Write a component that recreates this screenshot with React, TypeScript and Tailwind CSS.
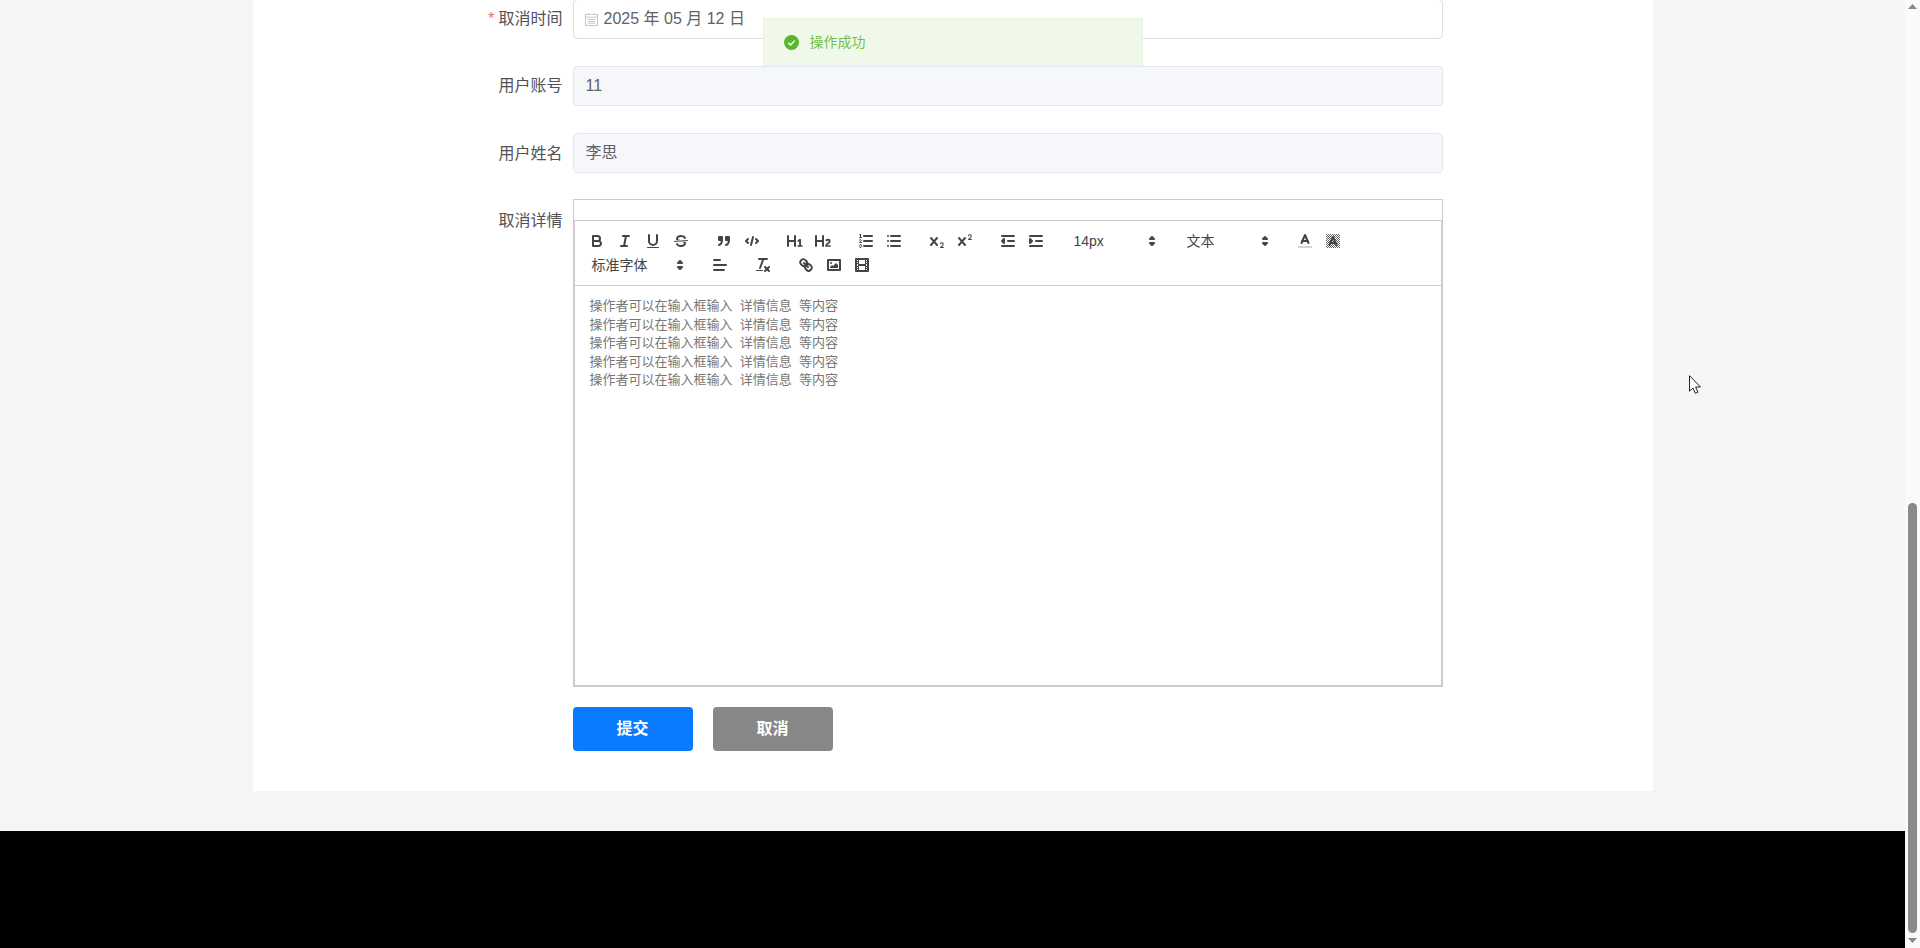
import type { ReactNode } from "react";

const FILL = { fill: "#444", stroke: "none" };

function Glyph({ children }: { children: ReactNode }) {
  return (
    <svg
      viewBox="0 0 18 18"
      className="h-[18px] w-[18px]"
      fill="none"
      stroke="#444"
      strokeWidth={2}
      strokeLinecap="round"
      strokeLinejoin="round"
    >
      {children}
    </svg>
  );
}

function ToolButton({ children }: { children: ReactNode }) {
  return (
    <button type="button" className="h-6 w-7 px-[5px] py-[3px]">
      <Glyph>{children}</Glyph>
    </button>
  );
}

function Picker({ label, width }: { label: string; width: string }) {
  return (
    <div className={`relative flex h-6 items-center pl-[9px] text-sm text-[#444] ${width}`}>
      <span>{label}</span>
      <svg
        viewBox="0 0 18 18"
        className="absolute top-[3px] right-[2px] h-[18px] w-[18px]"
        fill="#444"
        stroke="#444"
        strokeWidth={2}
        strokeLinejoin="round"
      >
        <polygon points="7 11 9 13 11 11 7 11" />
        <polygon points="7 7 9 5 11 7 7 7" />
      </svg>
    </div>
  );
}

function Formats({ children }: { children: ReactNode }) {
  return <div className="mr-[15px] flex h-6">{children}</div>;
}

function Toolbar() {
  return (
    <div className="flex flex-wrap border border-[#ccc] p-2">
      <Formats>
        <ToolButton>
          <path d="M5,4H9.5A2.5,2.5,0,0,1,12,6.5v0A2.5,2.5,0,0,1,9.5,9H5A0,0,0,0,1,5,9V4A0,0,0,0,1,5,4Z" />
          <path d="M5,9h5.5A2.5,2.5,0,0,1,13,11.5v0A2.5,2.5,0,0,1,10.5,14H5a0,0,0,0,1,0,0V9A0,0,0,0,1,5,9Z" />
        </ToolButton>
        <ToolButton>
          <line x1="7" x2="13" y1="4" y2="4" />
          <line x1="5" x2="11" y1="14" y2="14" />
          <line x1="8" x2="10" y1="14" y2="4" />
        </ToolButton>
        <ToolButton>
          <path d="M5,3V9a4.012,4.012,0,0,0,4,4H9a4.012,4.012,0,0,0,4-4V3" />
          <rect {...FILL} height="1" rx="0.5" ry="0.5" width="12" x="3" y="15" />
        </ToolButton>
        <ToolButton>
          <line strokeWidth={1} x1="15.5" x2="2.5" y1="8.5" y2="9.5" />
          <path {...FILL} d="M9.007,8C6.542,7.791,6,7.519,6,6.5,6,5.792,7.283,5,9,5c1.571,0,2.765.679,2.969,1.309a1,1,0,0,0,1.9-.617C13.356,4.106,11.354,3,9,3,6.2,3,4,4.538,4,6.5a3.2,3.2,0,0,0,.5,1.843Z" />
          <path {...FILL} d="M8.984,10C11.457,10.208,12,10.479,12,11.5c0,.708-1.283,1.5-3,1.5-1.571,0-2.765-.679-2.969-1.309a1,1,0,1,0-1.9.617C4.644,13.894,6.646,15,9,15c2.8,0,5-1.538,5-3.5a3.2,3.2,0,0,0-.5-1.843Z" />
        </ToolButton>
      </Formats>
      <Formats>
        <ToolButton>
          <rect fill="#444" height="3" width="3" x="4" y="5" />
          <rect fill="#444" height="3" width="3" x="11" y="5" />
          <path d="M7,8c0,4.031-3,5-3,5" />
          <path d="M14,8c0,4.031-3,5-3,5" />
        </ToolButton>
        <ToolButton>
          <polyline points="5 7 3 9 5 11" />
          <polyline points="13 7 15 9 13 11" />
          <line x1="10" x2="8" y1="5" y2="13" />
        </ToolButton>
      </Formats>
      <Formats>
        <ToolButton>
          <path {...FILL} d="M10,4V14a1,1,0,0,1-2,0V10H3v4a1,1,0,0,1-2,0V4A1,1,0,0,1,3,4V8H8V4a1,1,0,0,1,2,0Zm6.06787,9.209H14.98975V7.59863a.54085.54085,0,0,0-.605-.60547h-.62744a1.01119,1.01119,0,0,0-.748.29688L11.645,8.56641a.5435.5435,0,0,0-.022.8584l.28613.30762a.53861.53861,0,0,0,.84717.0332l.09912-.08789a1.2137,1.2137,0,0,0,.2417-.35254h.02246s-.01123.30859-.01123.60547V13.209H12.041a.54085.54085,0,0,0-.605.60547v.43945a.54085.54085,0,0,0,.605.60547h4.02686a.54085.54085,0,0,0,.605-.60547v-.43945A.54085.54085,0,0,0,16.06787,13.209Z" />
        </ToolButton>
        <ToolButton>
          <path {...FILL} d="M16.73975,13.81445v.43945a.54085.54085,0,0,1-.605.60547H11.855a.58392.58392,0,0,1-.64893-.60547V14.0127c0-2.90527,3.39941-3.42187,3.39941-4.55469a.77675.77675,0,0,0-.84717-.78125,1.17684,1.17684,0,0,0-.83594.38477c-.2749.26367-.561.374-.85791.13184l-.4292-.34082c-.30811-.24219-.38525-.51758-.1543-.81445a2.97155,2.97155,0,0,1,2.45361-1.17676,2.45393,2.45393,0,0,1,2.68408,2.40918c0,2.45312-3.1792,2.92676-3.27832,3.93848h2.79443A.54085.54085,0,0,1,16.73975,13.81445ZM9,3A.99974.99974,0,0,0,8,4V8H3V4A1,1,0,0,0,1,4V14a1,1,0,0,0,2,0V10H8v4a1,1,0,0,0,2,0V4A.99974.99974,0,0,0,9,3Z" />
        </ToolButton>
      </Formats>
      <Formats>
        <ToolButton>
          <line x1="7" x2="15" y1="4" y2="4" />
          <line x1="7" x2="15" y1="9" y2="9" />
          <line x1="7" x2="15" y1="14" y2="14" />
          <line strokeWidth={1} x1="2.5" x2="4.5" y1="5.5" y2="5.5" />
          <path {...FILL} d="M3.5,6A0.5,0.5,0,0,1,3,5.5V3.085l-0.276.138A0.5,0.5,0,0,1,2.053,3c-0.124-.247-0.023-0.324.224-0.447l1-.5A0.5,0.5,0,0,1,4,2.5v3A0.5,0.5,0,0,1,3.5,6Z" />
          <path strokeWidth={1} d="M4.5,10.5h-2c0-.234,1.85-1.076,1.85-2.234A0.959,0.959,0,0,0,2.5,8.156" />
          <path strokeWidth={1} d="M2.5,14.846a0.959,0.959,0,0,0,1.85-.109A0.7,0.7,0,0,0,3.75,14a0.688,0.688,0,0,0,.6-0.736,0.959,0.959,0,0,0-1.85-.109" />
        </ToolButton>
        <ToolButton>
          <line x1="6" x2="15" y1="4" y2="4" />
          <line x1="6" x2="15" y1="9" y2="9" />
          <line x1="6" x2="15" y1="14" y2="14" />
          <line x1="3" x2="3" y1="4" y2="4" />
          <line x1="3" x2="3" y1="9" y2="9" />
          <line x1="3" x2="3" y1="14" y2="14" />
        </ToolButton>
      </Formats>
      <Formats>
        <ToolButton>
          <path {...FILL} d="M15.5,15H13.861a3.858,3.858,0,0,0,1.914-2.975,1.8,1.8,0,0,0-1.6-1.751A1.921,1.921,0,0,0,12.021,11.7a0.50013,0.50013,0,1,0,.957.291h0a0.914,0.914,0,0,1,1.053-.725,0.81,0.81,0,0,1,.744.762c0,1.076-1.16971,1.86982-1.93971,2.43082A1.45639,1.45639,0,0,0,12,15.5a0.5,0.5,0,0,0,.5.5h3A0.5,0.5,0,0,0,15.5,15Z" />
          <path {...FILL} d="M9.65,5.241a1,1,0,0,0-1.409.108L6,7.964,3.759,5.349A1,1,0,0,0,2.192,6.59178Q2.21,6.6,2.241,6.651L4.684,9.5,2.241,12.35A1,1,0,0,0,3.71,13.70722q0.02-.02.049-0.059L6,11.036l2.241,2.612a1,1,0,0,0,1.567-1.24277Q9.79,12.4,9.759,12.35L7.316,9.5,9.759,6.651A1,1,0,0,0,9.65,5.241Z" />
        </ToolButton>
        <ToolButton>
          <path {...FILL} d="M15.5,7H13.861a4.015,4.015,0,0,0,1.914-2.975,1.8,1.8,0,0,0-1.6-1.751A1.922,1.922,0,0,0,12.021,3.7a0.5,0.5,0,1,0,.957.291,0.917,0.917,0,0,1,1.053-.725,0.81,0.81,0,0,1,.744.762c0,1.077-1.164,1.925-1.934,2.486A1.423,1.423,0,0,0,12,7.5a0.5,0.5,0,0,0,.5.5h3A0.5,0.5,0,0,0,15.5,7Z" />
          <path {...FILL} d="M9.651,5.241a1,1,0,0,0-1.41.108L6,7.964,3.759,5.349a1,1,0,1,0-1.519,1.3L4.683,9.5,2.241,12.35a1,1,0,1,0,1.519,1.3L6,11.036l2.241,2.613a1,1,0,0,0,1.519-1.3L7.317,9.5,9.759,6.651A1,1,0,0,0,9.651,5.241Z" />
        </ToolButton>
      </Formats>
      <Formats>
        <ToolButton>
          <line x1="3" x2="15" y1="14" y2="14" />
          <line x1="3" x2="15" y1="4" y2="4" />
          <line x1="9" x2="15" y1="9" y2="9" />
          <polyline fill="#444" points="5 7 5 11 3 9 5 7" />
        </ToolButton>
        <ToolButton>
          <line x1="3" x2="15" y1="14" y2="14" />
          <line x1="3" x2="15" y1="4" y2="4" />
          <line x1="9" x2="15" y1="9" y2="9" />
          <polyline fill="#444" points="3 7 3 11 5 9 3 7" />
        </ToolButton>
      </Formats>
      <Formats>
        <Picker label="14px" width="w-[98px]" />
      </Formats>
      <Formats>
        <Picker label="文本" width="w-[98px]" />
      </Formats>
      <Formats>
        <ToolButton>
          <line stroke="#aaa" strokeWidth={1} strokeLinecap="square" x1="2.5" x2="15.5" y1="15" y2="15" />
          <polyline points="5.5 11 9 3 12.5 11" />
          <line x1="11.63" x2="6.38" y1="9" y2="9" />
        </ToolButton>
        <ToolButton>
          <defs>
            <pattern id="bg-hatch" width="2" height="2" patternUnits="userSpaceOnUse">
              <rect width="1" height="1" fill="#666" stroke="none" />
              <rect x="1" y="1" width="1" height="1" fill="#666" stroke="none" />
            </pattern>
          </defs>
          <rect x="2" y="2" width="14" height="14" fill="url(#bg-hatch)" stroke="none" />
          <polyline points="5.5 13 9 5 12.5 13" />
          <line x1="11.63" x2="6.38" y1="11" y2="11" />
        </ToolButton>
      </Formats>
      <Formats>
        <Picker label="标准字体" width="w-[108px]" />
      </Formats>
      <Formats>
        <ToolButton>
          <line x1="3" x2="15" y1="9" y2="9" />
          <line x1="3" x2="13" y1="14" y2="14" />
          <line x1="3" x2="9" y1="4" y2="4" />
        </ToolButton>
      </Formats>
      <Formats>
        <ToolButton>
          <line x1="5" x2="13" y1="3" y2="3" />
          <line x1="6" x2="9.35" y1="12" y2="3" />
          <line x1="11" x2="15" y1="11" y2="15" />
          <line x1="15" x2="11" y1="11" y2="15" />
          <rect {...FILL} height="1" rx="0.5" ry="0.5" width="7" x="2" y="14" />
        </ToolButton>
      </Formats>
      <Formats>
        <ToolButton>
          <line x1="7" x2="11" y1="7" y2="11" />
          <path d="M8.9,4.577a3.476,3.476,0,0,1,.36,4.679A3.476,3.476,0,0,1,4.577,8.9C3.185,7.5,2.035,6.4,4.217,4.217S7.5,3.185,8.9,4.577Z" />
          <path d="M13.423,9.1a3.476,3.476,0,0,0-4.679-.36,3.476,3.476,0,0,0,.36,4.679c1.392,1.392,2.5,2.542,4.679.36S14.815,10.5,13.423,9.1Z" />
        </ToolButton>
        <ToolButton>
          <rect height="10" width="12" x="3" y="4" />
          <circle {...FILL} cx="6" cy="7" r="1" />
          <polyline {...FILL} points="5 12 5 11 7 9 8 10 11 7 13 9 13 12 5 12" />
        </ToolButton>
        <ToolButton>
          <rect height="12" width="12" x="3" y="3" />
          <rect {...FILL} height="12" width="1" x="5" y="3" />
          <rect {...FILL} height="12" width="1" x="12" y="3" />
          <rect {...FILL} height="2" width="8" x="5" y="8" />
          <rect {...FILL} height="1" width="3" x="3" y="5" />
          <rect {...FILL} height="1" width="3" x="3" y="7" />
          <rect {...FILL} height="1" width="3" x="3" y="10" />
          <rect {...FILL} height="1" width="3" x="3" y="12" />
          <rect {...FILL} height="1" width="3" x="12" y="5" />
          <rect {...FILL} height="1" width="3" x="12" y="7" />
          <rect {...FILL} height="1" width="3" x="12" y="10" />
          <rect {...FILL} height="1" width="3" x="12" y="12" />
        </ToolButton>
      </Formats>
    </div>
  );
}

function FormRow({
  label,
  required,
  spacing = "mb-[27px]",
  nudge = "",
  children,
}: {
  label: string;
  required?: boolean;
  spacing?: string;
  nudge?: string;
  children: ReactNode;
}) {
  return (
    <div className={`flex ${spacing}`}>
      <label className={`h-10 w-[121px] shrink-0 text-right text-base leading-10 text-[#505257] ${nudge}`}>
        {required && <span className="mr-1 text-[#f56c6c]">*</span>}
        {label}
      </label>
      <div className="ml-[10px] min-w-0 flex-1">{children}</div>
    </div>
  );
}

function DisabledInput({ value }: { value: string }) {
  return (
    <div className="flex h-10 items-center rounded border border-[#e4e7ed] bg-[#f5f7fa] px-3 text-base text-[#606266]">
      {value}
    </div>
  );
}

const DETAIL_LINES = [1, 2, 3, 4, 5];

export default function App() {
  return (
    <div className="flex h-[948px] overflow-hidden bg-[#f5f5f5] font-['Liberation_Sans','Noto_Sans_CJK_SC',sans-serif]">
      <main className="relative flex min-w-0 flex-1 flex-col">
        <section className="mx-auto -mt-px w-[1400px] bg-white pr-[210px] pb-10 pl-[189px]">
          <FormRow label="取消时间" required>
            <div className="flex h-10 items-center rounded border border-[#dcdfe6] bg-white pl-[11px] text-base text-[#606266]">
              <svg viewBox="0 0 14 14" className="mr-[6px] h-[13px] w-[13px] shrink-0" fill="none" stroke="#c0c4cc" strokeWidth={1}>
                <rect x="0.5" y="1.5" width="13" height="12" />
                <path d="M0.5 4.5h13M3 7h8M3 9h8M3 11h8M4 0v2M10 0v2" />
              </svg>
              2025 年 05 月 12 日
            </div>
          </FormRow>
          <FormRow label="用户账号">
            <DisabledInput value="11" />
          </FormRow>
          <FormRow label="用户姓名" nudge="pt-px">
            <DisabledInput value="李思" />
          </FormRow>
          <FormRow label="取消详情" spacing="mb-5" nudge="pt-px">
            <div className="-mt-px border border-[#ccc]">
              <div className="h-5" />
              <Toolbar />
              <div className="h-[400px] border border-t-0 border-[#ccc] px-[15px] pt-[11px] text-[13px] leading-[18.6px] whitespace-pre text-[#777]">
                {DETAIL_LINES.map((n) => (
                  <p key={n}>操作者可以在输入框输入  详情信息  等内容</p>
                ))}
              </div>
            </div>
          </FormRow>
          <div className="ml-[131px] flex gap-5">
            <button type="button" className="h-11 w-[120px] rounded bg-[#0a7aff] text-base font-semibold text-white">
              提交
            </button>
            <button type="button" className="h-11 w-[120px] rounded bg-[#888] text-base font-semibold text-white">
              取消
            </button>
          </div>
        </section>
        <div className="h-10 shrink-0" />
        <footer className="flex-1 bg-black" />

        <div className="absolute top-[18px] left-1/2 flex h-12 w-[380px] -translate-x-1/2 items-center border border-[#e8f5df] bg-[#f0f9e9] pl-5 text-sm text-[#72c04a]">
          <svg viewBox="0 0 16 16" className="mr-[11px] h-[15px] w-[15px] shrink-0">
            <circle cx="8" cy="8" r="8" fill="#5cb531" />
            <path d="M4.6 8.2l2.4 2.4 4.4-4.6" fill="none" stroke="#fff" strokeWidth={1.5} />
          </svg>
          操作成功
        </div>

        <svg viewBox="0 0 12 19" className="absolute top-[375px] left-[1689px] h-[19px] w-3">
          <path d="M0.5 0.7V16.2L4 13l2.3 5.3 2.6-1.1-2.3-5.2h4.9Z" fill="#fff" stroke="#222" strokeWidth={1} />
        </svg>
      </main>

      <aside className="relative flex w-[15px] shrink-0 flex-col items-center bg-[#fafafa]">
        <svg viewBox="0 0 9 5" className="mt-1 h-[5px] w-[9px]" fill="#888">
          <path d="M4.5 0L9 5H0Z" />
        </svg>
        <div className="mt-[494px] h-[430px] w-[9px] rounded-full bg-[#8a8a8a]" />
        <svg viewBox="0 0 9 5" className="mt-[5px] h-[5px] w-[9px]" fill="#888">
          <path d="M0 0H9L4.5 5Z" />
        </svg>
      </aside>
    </div>
  );
}
